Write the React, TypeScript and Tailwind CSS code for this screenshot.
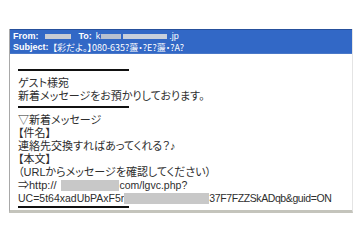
export default function App() {
  return (
    <div className="w-[360px] h-[240px] bg-white relative overflow-hidden">
      <div className="absolute left-[9px] top-[29px] w-[344px] h-[184px] border-l border-l-[#a8a8a8] border-r border-r-[#e4e4e4] border-b-[3px] border-b-[#c4c4bc] flex flex-col">
        <div className="h-[25px] bg-[#3268c6] border-t border-t-[#26509c] border-b border-b-[#4a78c8] flex flex-col justify-center pl-[3px] text-white font-bold text-[9px] leading-[11px] font-['Liberation_Sans','Noto_Sans_CJK_JP',sans-serif]">
          <div className="flex items-center">
            <span>From:</span>
            <span className="inline-block w-[26px] h-[5px] bg-[#c8ccd4] ml-[6px]" />
            <span className="ml-[8px]">To:</span>
            <span className="ml-[4px] font-normal">k</span>
            <span className="inline-block w-[20px] h-[5px] bg-[#b8c0d0] ml-[1px]" />
            <span className="inline-block w-[44px] h-[5px] bg-[#c8d0dc] ml-[2px]" />
            <span className="ml-[2px] font-normal">.jp</span>
          </div>
          <div className="flex items-center">
            <span>Subject:</span>
            <span className="ml-[4px] font-normal font-['Noto_Sans_CJK_JP',sans-serif] [font-feature-settings:'palt']">【彩だよ。】080-635?蘯・?E?蘯・?A?</span>
          </div>
        </div>
        <div className="pl-[8px] text-[11px] leading-[13px] text-[#2e2e2e] flex flex-col font-['Liberation_Sans','Noto_Sans_CJK_JP',sans-serif] [font-feature-settings:'palt']">
          <div className="w-[111px] h-[2px] bg-[#111] mt-[15px] mb-[6px]" />
          <div>ゲスト様宛</div>
          <div>新着メッセージをお預かりしております。</div>
          <div className="w-[111px] h-[2px] bg-[#111] mt-[3px] mb-[6px]" />
          <div>▽新着メッセージ</div>
          <div>【件名】</div>
          <div>連絡先交換すればあってくれる？♪</div>
          <div>【本文】</div>
          <div>（URLからメッセージを確認してください）</div>
          <div className="flex items-center whitespace-nowrap">
            <span>⇒http://</span>
            <span className="inline-block w-[58px] h-[11px] bg-[#c8c8c8] ml-[4px]" />
            <span className="text-[10.5px] ml-[1px]">com/lgvc.php?</span>
          </div>
          <div className="flex items-center whitespace-nowrap text-[10.5px]">
            <span>UC=5t64xadUbPAxF5r</span>
            <span className="inline-block w-[85px] h-[11px] bg-[#c8c8c8]" />
            <span className="tracking-[-0.4px]">37F7FZZSkADqb&amp;guid=ON</span>
          </div>
          <div className="w-[111px] h-[2px] bg-[#111] mt-[1px]" />
        </div>
      </div>
    </div>
  );
}
